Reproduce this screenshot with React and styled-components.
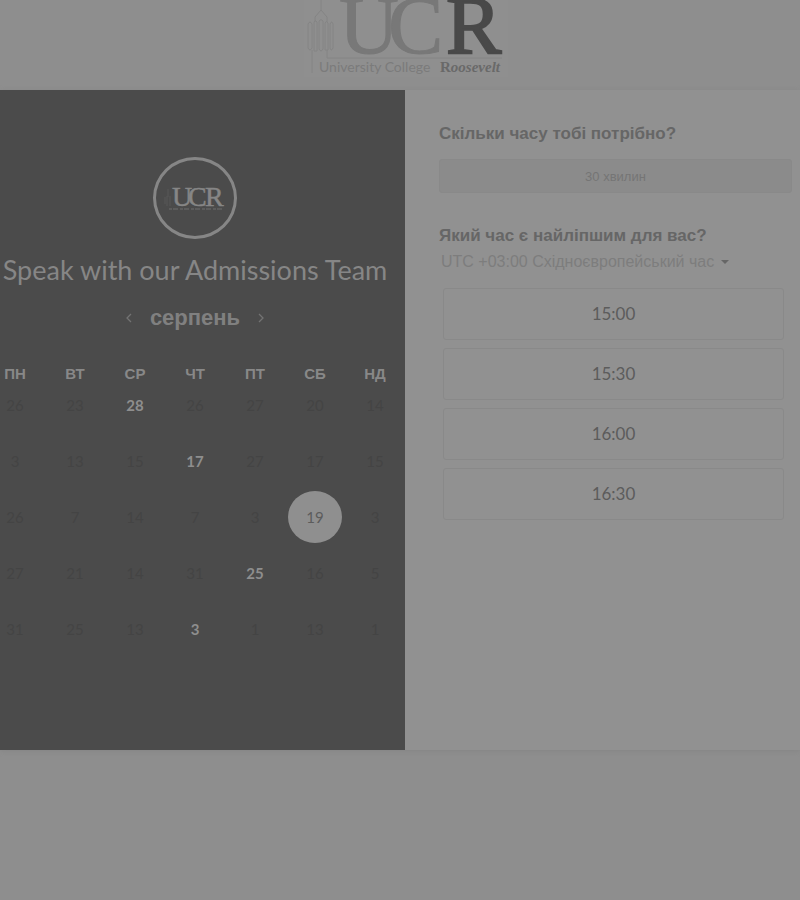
import React, { useState } from "react";
import styled, { createGlobalStyle } from "styled-components";

const GlobalStyle = createGlobalStyle`
  * { box-sizing: border-box; }
  body {
    margin: 0;
    background: #8e8e8e;
    color: #5e5e5e;
    font-family: "Liberation Sans", Arial, sans-serif;
    overflow-x: hidden;
  }
  button, select { font: inherit; color: inherit; background: none; border: 0; padding: 0; margin: 0; cursor: pointer; }
`;

const Page = styled.div`
  min-height: 100vh;
`;

const Header = styled.header`
  display: flex;
  justify-content: center;
  height: 90px;
  padding-left: 12px;
`;

const Booking = styled.main`
  display: grid;
  grid-template-columns: 405fr 395fr;
  min-height: 660px;
  box-shadow: 0 1px 5px #858585;
`;

const DatePanel = styled.section`
  background: #4b4b4b;
  color: #868686;
  overflow: hidden;
`;

const DateContent = styled.div`
  display: flex;
  flex-direction: column;
  align-items: center;
  margin-left: -15px;
  padding-top: 67px;
`;

const Avatar = styled.div`
  display: flex;
  align-items: center;
  justify-content: center;
  width: 84px;
  height: 82px;
  border: 3px solid #868686;
  border-radius: 50%;
`;

const Title = styled.h1`
  margin: 15px 0 0;
  font: 400 27px/32px Lato, sans-serif;
  white-space: nowrap;
`;

const MonthNav = styled.div`
  display: flex;
  align-items: center;
  gap: 16px;
  margin-top: 18px;
`;

const Month = styled.h2`
  margin: 0;
  font: 700 22px/28px "Liberation Sans", sans-serif;
  color: #808080;
`;

const Arrow = styled.button`
  display: flex;
  align-items: center;
  justify-content: center;
  width: 10px;
  height: 24px;
`;

const Calendar = styled.table`
  width: 100%;
  margin-top: 37px;
  table-layout: fixed;
  border-collapse: collapse;
`;

const Weekday = styled.th`
  height: 10px;
  padding: 0;
  font: 700 15px/10px "Liberation Sans", sans-serif;
  color: #888888;
  text-align: center;
`;

const DayCell = styled.td`
  height: 56px;
  padding: 0;
  text-align: center;
  vertical-align: top;
`;

const Day = styled.button`
  width: 54px;
  height: 52px;
  border-radius: 50%;
  vertical-align: top;
  font: ${(p) => (p.$open && !p.$selected ? 700 : 400)} 15px/20px Lato, sans-serif;
  color: ${(p) => (p.$selected ? "#5c5c5c" : p.$open ? "#8e8e8e" : "#444444")};
  background: ${(p) => (p.$selected ? "#8f8f8f" : "transparent")};
`;

const TimePanel = styled.section`
  background: #919191;
  padding: 33px 8px 0 34px;
`;

const Question = styled.h3`
  margin: 0;
  font: 700 17px/22px "Liberation Sans", sans-serif;
  color: #666666;
`;

const Duration = styled.button`
  display: block;
  width: 100%;
  height: 34px;
  margin: 14px 0 32px;
  border: 1px solid #898989;
  border-radius: 3px;
  background: #8b8b8b;
  color: #757575;
  font-size: 13px;
`;

const Zone = styled.label`
  display: flex;
  align-items: center;
  gap: 6px;
  height: 30px;
  padding-left: 2px;
  color: #7d7d7d;
`;

const ZoneSelect = styled.select`
  appearance: none;
  font: 400 16px/24px "Liberation Sans", sans-serif;
`;

const SlotList = styled.div`
  display: grid;
  gap: 8px;
  padding: 11px 8px 0 4px;
`;

const Slot = styled.button`
  height: 52px;
  border: 1px solid #898989;
  border-radius: 3px;
  font: 400 17px/24px Lato, sans-serif;
  color: #5c5c5c;
`;

const serif = '"Liberation Serif", serif';

function CollegeLogo() {
  return (
    <svg width="204" height="80" viewBox="304 0 204 80" role="img" aria-label="University College Roosevelt">
      <rect x="304" y="0" width="204" height="77" fill="#8f8f8f" />
      <g fill="none" stroke="#848484">
        <path d="M321 0v10l-6 7M321 10l6 7v5M315 17v5" />
        <path d="M308 24q2-4 4 0v24q-2 4-4 0zM314 22q1-3 3 0v29h-3zM319 21q2-3 4 0v28q-2 4-4 0zM325 23q1-3 3 0v27h-3zM330 24q2-4 3 0v24q-2 4-3 0z" />
        <path d="M312 50v23M327 50v8h175" />
      </g>
      <g fontFamily={serif} fontSize="83">
        <text x="339" y="53" fill="#787878" stroke="#787878">U</text>
        <text x="388" y="53" fill="#787878" stroke="#787878">C</text>
        <text x="446" y="53" fill="#494949" stroke="#494949" strokeWidth="2">R</text>
      </g>
      <text x="319" y="72" fontFamily="Lato, sans-serif" fontSize="14" fill="#7b7b7b">University College</text>
      <text x="440" y="72" fontFamily={serif} fontSize="15" fontWeight="700" fill="#696969">
        R<tspan fontStyle="italic">oosevelt</tspan>
      </text>
    </svg>
  );
}

function AvatarLogo() {
  return (
    <svg width="64" height="32" viewBox="163 181 64 32" role="img" aria-label="UCR">
      <path d="M168 188v8M165 196v7M167 195v10M170 195v10" fill="none" stroke="#585858" />
      <g fontFamily={serif} fontSize="28" fill="#868686" stroke="#868686" strokeWidth="0.5">
        <text x="172" y="205">U</text>
        <text x="188" y="205">C</text>
        <text x="205" y="205">R</text>
      </g>
      <path d="M169 208h54" stroke="#5c5c5c" strokeWidth="2" strokeDasharray="3 1 5 2" />
    </svg>
  );
}

const Chevron = ({ d }) => (
  <svg width="8" height="10" viewBox="0 0 8 10" fill="none" stroke="#737373" strokeWidth="1.3" aria-hidden="true">
    <path d={d} />
  </svg>
);

const weekdays = ["ПН", "ВТ", "СР", "ЧТ", "ПТ", "СБ", "НД"];
const weeks = [
  [26, 23, 28, 26, 27, 20, 14],
  [3, 13, 15, 17, 27, 17, 15],
  [26, 7, 14, 7, 3, 19, 3],
  [27, 21, 14, 31, 25, 16, 5],
  [31, 25, 13, 3, 1, 13, 1],
];
const openDays = ["0-2", "1-3", "2-5", "3-4", "4-3"];
const slots = ["15:00", "15:30", "16:00", "16:30"];

export default function App() {
  const [selected, setSelected] = useState("2-5");
  return (
    <Page>
      <GlobalStyle />
      <Header><CollegeLogo /></Header>
      <Booking>
        <DatePanel>
          <DateContent>
            <Avatar><AvatarLogo /></Avatar>
            <Title>Speak with our Admissions Team</Title>
            <MonthNav>
              <Arrow aria-label="Попередній місяць"><Chevron d="M6 1 2 5l4 4" /></Arrow>
              <Month>серпень</Month>
              <Arrow aria-label="Наступний місяць"><Chevron d="m2 1 4 4-4 4" /></Arrow>
            </MonthNav>
            <Calendar>
              <thead>
                <tr>{weekdays.map((name) => <Weekday key={name} scope="col">{name}</Weekday>)}</tr>
              </thead>
              <tbody>
                {weeks.map((week, row) => (
                  <tr key={row}>
                    {week.map((day, col) => {
                      const id = `${row}-${col}`;
                      const open = openDays.includes(id);
                      return (
                        <DayCell key={id}>
                          <Day $open={open} $selected={selected === id} disabled={!open} onClick={() => setSelected(id)}>
                            {day}
                          </Day>
                        </DayCell>
                      );
                    })}
                  </tr>
                ))}
              </tbody>
            </Calendar>
          </DateContent>
        </DatePanel>
        <TimePanel>
          <Question>Скільки часу тобі потрібно?</Question>
          <Duration>30 хвилин</Duration>
          <Question>Який час є найліпшим для вас?</Question>
          <Zone>
            <ZoneSelect aria-label="Часовий пояс">
              <option>UTC +03:00 Східноєвропейський час</option>
            </ZoneSelect>
            <svg width="8" height="4" viewBox="0 0 8 4" aria-hidden="true"><path d="M0 0h8L4 4z" fill="#666666" /></svg>
          </Zone>
          <SlotList>
            {slots.map((time) => <Slot key={time}>{time}</Slot>)}
          </SlotList>
        </TimePanel>
      </Booking>
    </Page>
  );
}
